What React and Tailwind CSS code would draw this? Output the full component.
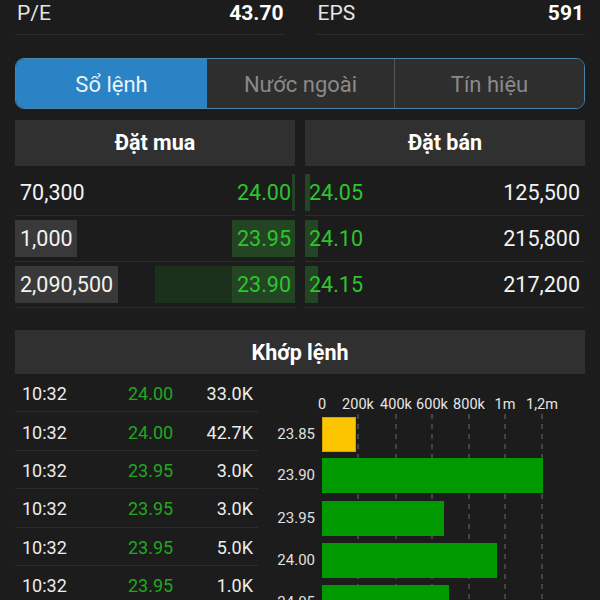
const bids = [
  { qty: "70,300", price: "24.00", qtyBar: 0, volBar: 0, priceBar: 3 },
  { qty: "1,000", price: "23.95", qtyBar: 62, volBar: 0, priceBar: 63 },
  { qty: "2,090,500", price: "23.90", qtyBar: 103, volBar: 140, priceBar: 63 },
];

const asks = [
  { price: "24.05", qty: "125,500", bar: 5 },
  { price: "24.10", qty: "215,800", bar: 13 },
  { price: "24.15", qty: "217,200", bar: 13 },
];

const trades = [
  ["10:32", "24.00", "33.0K"],
  ["10:32", "24.00", "42.7K"],
  ["10:32", "23.95", "3.0K"],
  ["10:32", "23.95", "3.0K"],
  ["10:32", "23.95", "5.0K"],
  ["10:32", "23.95", "1.0K"],
];

const ticks = [
  ["0", 64],
  ["200k", 100],
  ["400k", 138],
  ["600k", 174],
  ["800k", 211],
  ["1m", 247],
  ["1,2m", 284],
];

const bars = [
  { label: "23.85", w: 34, y: 43, color: "#fdc400" },
  { label: "23.90", w: 221, y: 84, color: "#009a00" },
  { label: "23.95", w: 122, y: 127, color: "#009a00" },
  { label: "24.00", w: 175, y: 169, color: "#009a00" },
  { label: "24.05", w: 127, y: 211, color: "#009a00" },
];

function Stat({ label, value }) {
  return (
    <div className="flex-1 h-[35px] flex justify-between items-start border-b border-[#2c2c2c]">
      <span className="text-[21px] leading-[26px] text-[#e4e4e4] pl-[2px]">{label}</span>
      <span className="text-[21px] leading-[26px] font-bold text-white pr-[1px]">{value}</span>
    </div>
  );
}

function VolumeChart() {
  return (
    <svg width="327" height="227" className="block" style={{ fontFamily: "Roboto, sans-serif" }}>
      {ticks.map(([t, x]) => (
        <text key={t} x={x} y={35} textAnchor="middle" fontSize="14.5" fill="#e6e6e6">{t}</text>
      ))}
      {ticks.slice(1).map(([t, x]) => (
        <line key={t} x1={x} x2={x} y1={40} y2={227} stroke="#6a6a6a" strokeWidth="1" strokeDasharray="5 5" />
      ))}
      {bars.map((b) => (
        <g key={b.label}>
          <rect x={64} y={b.y} width={b.w} height={35} fill={b.color} />
          <text x={57} y={b.y + 22} textAnchor="end" fontSize="15" fill="#e0e0e0">{b.label}</text>
        </g>
      ))}
      <rect x={64.5} y={43.5} width={33} height={34} fill="none" stroke="#d9a400" strokeWidth="1" />
    </svg>
  );
}

export default function App() {
  return (
    <div className="w-[600px] h-[600px] overflow-hidden bg-[#1c1c1c] px-[15px] text-white" style={{ fontFamily: "Roboto, 'Liberation Sans', sans-serif" }}>
      {/* P/E + EPS */}
      <div className="flex gap-[31px]">
        <Stat label="P/E" value="43.70" />
        <Stat label="EPS" value="591" />
      </div>

      {/* tabs */}
      <div className="mt-[23px] h-[51px] flex rounded-[9px] border border-[#4f84aa] overflow-hidden">
        <div className="w-[191px] flex items-center justify-center bg-[#2a83c4] text-[22px] text-[#e8f3fb] pt-[2px]">Sổ lệnh</div>
        <div className="w-[188px] flex items-center justify-center bg-[#2e2e2e] text-[22px] text-[#8a8a8a] border-r border-[#555] pt-[2px]">Nước ngoài</div>
        <div className="flex-1 flex items-center justify-center bg-[#2e2e2e] text-[22px] text-[#8a8a8a] pt-[2px]">Tín hiệu</div>
      </div>

      {/* order book */}
      <div className="mt-[11px] flex gap-[10px]">
        <div className="flex-1">
          <div className="h-[46px] bg-[#303030] flex items-center justify-center text-[21.5px] font-bold pt-[1px]">Đặt mua</div>
          <div className="mt-[4px]">
            {bids.map((r) => (
              <div key={r.price} className="relative h-[46px] border-b border-[#2c2c2c] flex items-center justify-between pl-[5px] pr-[4px] pt-[2px]">
                {r.qtyBar > 0 && <div className="absolute left-0 top-[4px] bottom-[4px] bg-[#393939]" style={{ width: r.qtyBar }} />}
                {r.volBar > 0 && <div className="absolute right-0 top-[4px] bottom-[4px] bg-[#1c311c]" style={{ width: r.volBar }} />}
                <div className="absolute right-0 top-[4px] bottom-[4px] bg-[#234523]" style={{ width: r.priceBar }} />
                <span className="relative text-[21.5px] text-[#f2f2f2]">{r.qty}</span>
                <span className="relative text-[21.5px] text-[#2cc52c]">{r.price}</span>
              </div>
            ))}
          </div>
        </div>
        <div className="flex-1">
          <div className="h-[46px] bg-[#303030] flex items-center justify-center text-[21.5px] font-bold pt-[1px]">Đặt bán</div>
          <div className="mt-[4px]">
            {asks.map((r) => (
              <div key={r.price} className="relative h-[46px] border-b border-[#2c2c2c] flex items-center justify-between pl-[4px] pr-[5px] pt-[2px]">
                <div className="absolute left-0 top-[4px] bottom-[4px] bg-[#234523]" style={{ width: r.bar }} />
                <span className="relative text-[21.5px] text-[#2cc52c]">{r.price}</span>
                <span className="relative text-[21.5px] text-[#f2f2f2]">{r.qty}</span>
              </div>
            ))}
          </div>
        </div>
      </div>

      {/* matched orders */}
      <div className="mt-[22px] h-[44px] bg-[#303030] flex items-center justify-center text-[21.5px] font-bold pt-[2px]">Khớp lệnh</div>
      <div className="flex">
        <div className="w-[243px]">
          {trades.map(([t, p, v], i) => (
            <div key={i} className="h-[38.4px] flex items-center border-b border-[#2c2c2c] pl-[7px] pr-[5px] pt-[2px]">
              <span className="w-[106px] text-[18px] text-[#ececec]">{t}</span>
              <span className="w-[60px] text-[18px] text-[#1fa81f]">{p}</span>
              <span className="flex-1 text-right text-[18px] text-[#ececec]">{v}</span>
            </div>
          ))}
        </div>
        <VolumeChart />
      </div>
    </div>
  );
}
